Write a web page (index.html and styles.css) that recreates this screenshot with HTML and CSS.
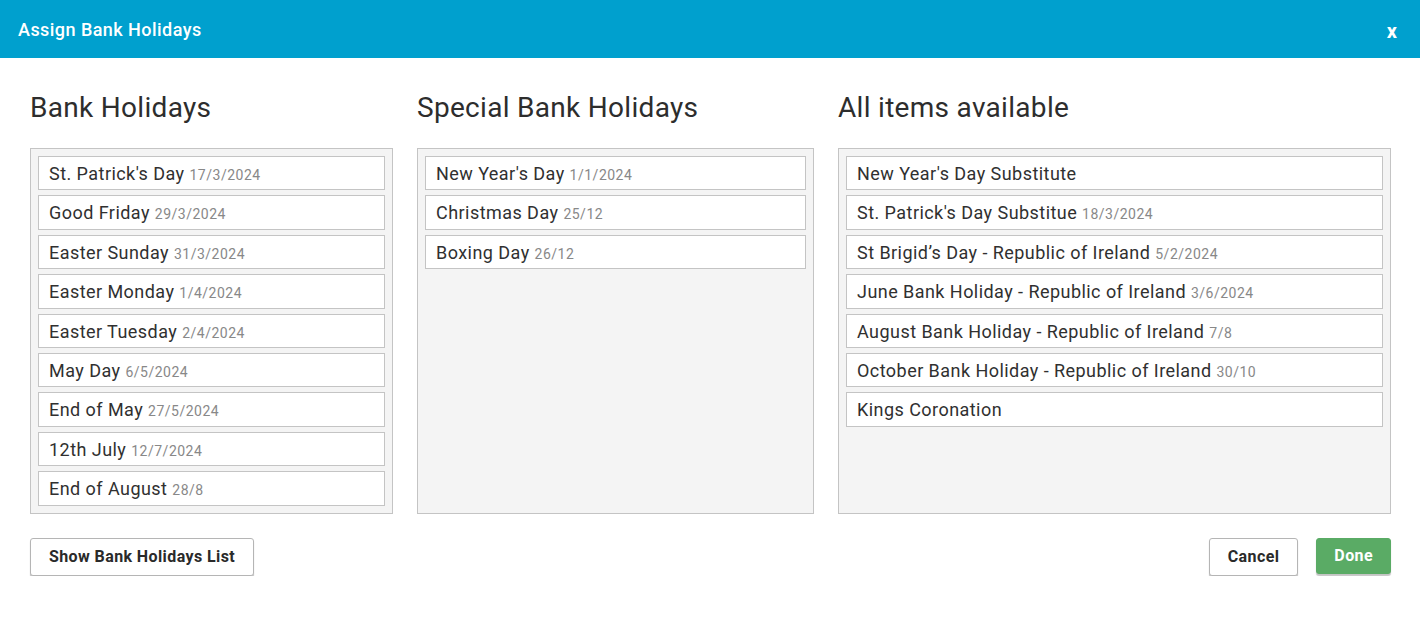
FILE: index.html
```html
<!DOCTYPE html>
<html>
<head>
<meta charset="utf-8">
<link rel="stylesheet" href="styles.css">
</head>
<body>
<div class="dialog">
  <div class="header">
    <span class="title">Assign Bank Holidays</span>
    <span class="close">x</span>
  </div>
  <div class="body">
    <div class="columns">
      <div class="col">
        <h2>Bank Holidays</h2>
        <div class="list">
          <div class="item">St. Patrick's Day <span class="date">17/3/2024</span></div>
          <div class="item">Good Friday <span class="date">29/3/2024</span></div>
          <div class="item">Easter Sunday <span class="date">31/3/2024</span></div>
          <div class="item">Easter Monday <span class="date">1/4/2024</span></div>
          <div class="item">Easter Tuesday <span class="date">2/4/2024</span></div>
          <div class="item">May Day <span class="date">6/5/2024</span></div>
          <div class="item">End of May <span class="date">27/5/2024</span></div>
          <div class="item">12th July <span class="date">12/7/2024</span></div>
          <div class="item">End of August <span class="date">28/8</span></div>
        </div>
      </div>
      <div class="col">
        <h2>Special Bank Holidays</h2>
        <div class="list">
          <div class="item">New Year's Day <span class="date">1/1/2024</span></div>
          <div class="item">Christmas Day <span class="date">25/12</span></div>
          <div class="item">Boxing Day <span class="date">26/12</span></div>
        </div>
      </div>
      <div class="col">
        <h2>All items available</h2>
        <div class="list">
          <div class="item">New Year's Day Substitute</div>
          <div class="item">St. Patrick's Day Substitue <span class="date">18/3/2024</span></div>
          <div class="item">St Brigid’s Day - Republic of Ireland <span class="date">5/2/2024</span></div>
          <div class="item">June Bank Holiday - Republic of Ireland <span class="date">3/6/2024</span></div>
          <div class="item">August Bank Holiday - Republic of Ireland <span class="date">7/8</span></div>
          <div class="item">October Bank Holiday - Republic of Ireland <span class="date">30/10</span></div>
          <div class="item">Kings Coronation</div>
        </div>
      </div>
    </div>
    <div class="footer">
      <button class="btn">Show Bank Holidays List</button>
      <div class="actions">
        <button class="btn">Cancel</button>
        <button class="btn btn-done">Done</button>
      </div>
    </div>
  </div>
</div>
</body>
</html>
```
FILE: styles.css
```css
* { box-sizing: border-box; }
html, body {
  margin: 0;
  padding: 0;
  background: #fff;
  font-family: Roboto, "Liberation Sans", sans-serif;
  color: #333;
}
.header {
  height: 58px;
  background: #00a0ce;
  color: #fff;
  display: flex;
  align-items: center;
  justify-content: space-between;
  padding: 0 23px 0 18px;
}
.title {
  font-size: 18px;
  font-weight: 500;
  letter-spacing: 0.45px;
}
.close {
  font-size: 20px;
  font-weight: 700;
  margin-top: 4px;
}
.body {
  padding: 0 29px 0 30px;
}
.columns {
  display: grid;
  grid-template-columns: 363px 397px 1fr;
  column-gap: 24px;
}
.col {
  display: flex;
  flex-direction: column;
}
.col h2 {
  font-size: 28px;
  font-weight: 400;
  letter-spacing: 0.3px;
  margin: 30px 0 0 0;
  height: 60px;
  line-height: 40px;
  color: #2d2d2d;
}
.list {
  flex: 1;
  background: #f4f4f4;
  border: 1px solid #c4c4c4;
  padding: 7px 7px 2px 7px;
}
.item {
  background: #fff;
  border: 1px solid #c4c4c4;
  height: 34.4px;
  margin-bottom: 5px;
  padding: 0 10px;
  font-size: 18px;
  letter-spacing: 0.45px;
  line-height: 33px;
  color: #303030;
  white-space: nowrap;
}
.date {
  font-size: 14px;
  letter-spacing: 0.5px;
  color: #888;
}
.footer {
  display: flex;
  justify-content: space-between;
  margin-top: 24px;
}
.actions {
  display: flex;
  gap: 18px;
}
.btn {
  font-family: Roboto, "Liberation Sans", sans-serif;
  font-size: 16px;
  font-weight: 700;
  letter-spacing: 0.4px;
  color: #2a2a2a;
  background: #fff;
  border: 1px solid #b5b5b5;
  border-radius: 3px;
  height: 38px;
  padding: 0 18px;
  box-shadow: 0 2px 1px #c4c4c4;
}
.btn-done {
  background: #5aab65;
  border-color: #5aab65;
  color: #fff;
  height: 36px;
  padding: 0 17px;
}
```
